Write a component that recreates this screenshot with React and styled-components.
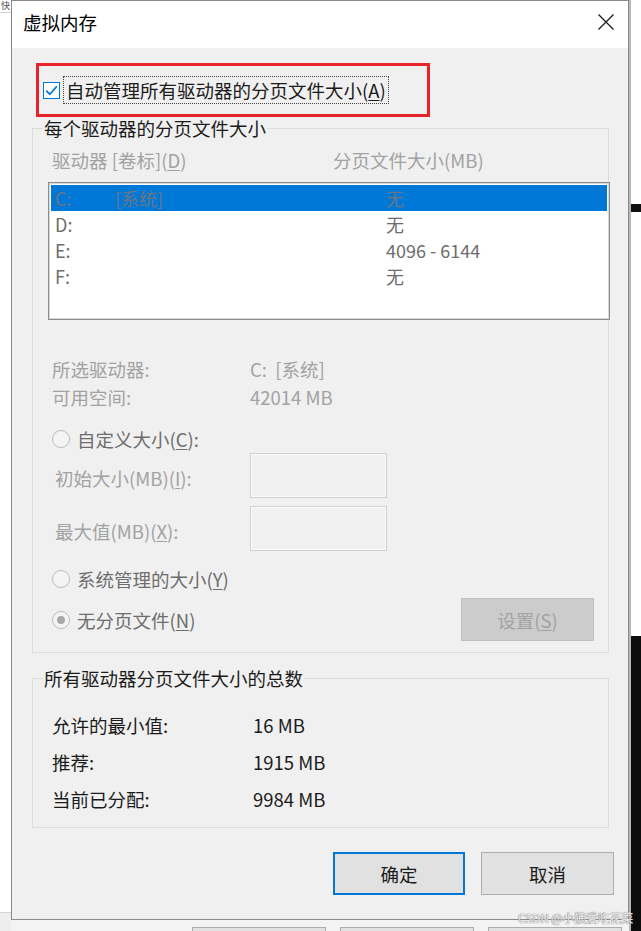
import React from 'react'
import styled, { createGlobalStyle } from 'styled-components'

const GlobalStyle = createGlobalStyle`
    html, body {
        margin: 0;
        padding: 0;
        background: #fff;
    }
    body {
        font-family: "Noto Sans CJK SC", "Noto Sans", sans-serif;
    }
    * {
        box-sizing: border-box;
    }
`

const DARK = '#1b1b1b'
const DIM = '#6d6d6d'
const FAINT = '#a2a2a2'
const FACE = '#f0f0f0'
const BLUE = '#0078d7'

const Screen = styled.div`
    position: relative;
    display: flex;
    width: 641px;
    height: 931px;
    overflow: hidden;
    background: #fff;
`

const LeftStrip = styled.div`
    width: 11px;
    display: flex;
    flex-direction: column;
`

const LeftTop = styled.div`
    height: 13px;
    border-bottom: 1px solid #d4d4d4;
    font-size: 9px;
    line-height: 11px;
    color: #555;
    padding-left: 1px;
`

const LeftFill = styled.div`
    flex: 1;
`

const LeftFoot = styled.div`
    height: 19px;
    background: #eeeeee;
    border-top: 1px solid #d6d6d6;
`

const MainColumn = styled.div`
    width: 618px;
    display: flex;
    flex-direction: column;
`

const Dialog = styled.div`
    height: 920px;
    display: flex;
    flex-direction: column;
    border: 1px solid #8a8a8a;
    background: ${FACE};
`

const TitleBar = styled.div`
    height: 47px;
    background: #fff;
    display: flex;
    align-items: center;
    justify-content: space-between;
    padding: 0 14px 6px 11px;
`

const Title = styled.span`
    font-size: 18.5px;
    color: #000;
    line-height: 22px;
`

const Body = styled.div`
    flex: 1;
    display: flex;
    flex-direction: column;
    padding: 15px 19px 0 20px;
    font-size: 18.5px;
`

const AutoRow = styled.div`
    margin-left: 4px;
    width: 394px;
    height: 54px;
    border: 3px solid #e8242b;
    display: flex;
    align-items: center;
    gap: 3px;
    padding-left: 4px;
`

const CheckLabel = styled.span`
    border: 1px dotted #444;
    padding: 0 2px;
    line-height: 26px;
    color: ${DARK};
    white-space: nowrap;
`

const Key = styled.span`
    text-decoration: underline;
    text-underline-offset: 2px;
    text-decoration-thickness: 1px;
`

const GroupBox = styled.fieldset`
    margin: ${p => p.$top}px 0 0 0;
    padding: 0 0 ${p => p.$bottom}px 10px;
    border: 1px solid #dcdcdc;
    min-inline-size: 0;
`

const Legend = styled.legend`
    padding: 0 1px;
    line-height: 20px;
    color: ${DARK};
`

const GroupInner = styled.div`
    padding: ${p => p.$top}px 0 0 ${p => p.$left}px;
    display: flex;
    flex-direction: column;
`

const ColumnHead = styled.div`
    display: grid;
    grid-template-columns: 281px 1fr;
    padding-left: 4px;
    line-height: 22px;
    color: ${FAINT};
`

const DriveList = styled.div`
    margin: 11px -2px 0 0;
    height: 138px;
    background: #fff;
    border: 1px solid #8c8c8c;
    box-shadow: inset 0 0 0 1px #d9d9d9;
    padding: 2px;
`

const DriveRow = styled.div`
    display: grid;
    grid-template-columns: 60px 271px 1fr;
    height: 26px;
    align-items: center;
    padding-left: 4px;
    font-size: 18px;
    line-height: 26px;
    color: ${p => (p.$selected ? '#6b7684' : DIM)};
    background: ${p => (p.$selected ? BLUE : 'transparent')};
`

const InfoGrid = styled.div`
    display: grid;
    grid-template-columns: 198px 1fr;
    grid-auto-rows: 28px;
    align-items: center;
    margin-top: 35px;
    padding-left: 4px;
    color: ${FAINT};
`

const RadioRow = styled.div`
    display: flex;
    align-items: center;
    gap: 7px;
    height: 28px;
    margin-top: ${p => p.$top}px;
    padding-left: 4px;
    color: ${DIM};
`

const Radio = styled.span`
    width: 18px;
    height: 18px;
    border-radius: 50%;
    border: 1px solid #bcbcbc;
    background: #f4f4f4;
    display: flex;
    align-items: center;
    justify-content: center;
    &::after {
        content: '';
        width: 8px;
        height: 8px;
        border-radius: 50%;
        background: ${p => (p.$checked ? '#a8a8a8' : 'transparent')};
    }
`

const FieldRow = styled.div`
    display: grid;
    grid-template-columns: 195px 137px;
    align-items: center;
    margin-top: ${p => p.$top}px;
    padding-left: 7px;
    color: ${FAINT};
`

const FieldLabel = styled.span`
    line-height: 22px;
    padding-top: 5px;
`

const FieldBox = styled.div`
    height: 45px;
    border: 1px solid #cfcfcf;
    box-shadow: inset 0 0 0 1px #fbfbfb;
    background: ${FACE};
`

const LastRow = styled.div`
    display: flex;
    align-items: center;
    justify-content: space-between;
    margin-top: 5px;
    padding-right: 14px;
`

const TotalsGrid = styled.div`
    display: grid;
    grid-template-columns: 201px 1fr;
    grid-auto-rows: 37px;
    align-items: center;
    color: ${DARK};
`

const ButtonBar = styled.div`
    display: flex;
    justify-content: flex-end;
    gap: 16px;
    margin: 24px -5px 0 0;
`

const Button = styled.div`
    width: ${p => p.$w || 133}px;
    height: 43px;
    display: flex;
    align-items: center;
    justify-content: center;
    font-size: 18.5px;
    color: ${p => (p.$disabled ? FAINT : DARK)};
    background: ${p => (p.$disabled ? '#cccccc' : '#e1e1e1')};
    border: ${p => (p.$primary ? `2px solid ${BLUE}` : p.$disabled ? '1px solid #bfbfbf' : '1px solid #adadad')};
`

const BottomStrip = styled.div`
    flex: 1;
    display: flex;
    align-items: flex-end;
    gap: 14px;
    padding-left: 181px;
    background: #f3f3f3;
`

const BackButton = styled.div`
    width: 134px;
    height: 4px;
    border: 1px solid #adadad;
    border-bottom: none;
    background: #e1e1e1;
`

const RightStrip = styled.div`
    flex: 1;
    display: flex;
    flex-direction: column;
    background: #fff;
    border-left: 2px solid #b8b8b8;
`

const RightBand = styled.div`
    height: ${p => p.$h}px;
    background: ${p => p.$bg};
    flex: ${p => (p.$grow ? 1 : 'none')};
`

const Watermark = styled.div`
    position: absolute;
    left: 518px;
    top: 910px;
    font-size: 12px;
    line-height: 15px;
    letter-spacing: -0.2px;
    color: #eeeeee;
    text-shadow: 0 0 1px #777, 0 0 1px #777;
    white-space: nowrap;
`

function CheckBox() {
    return (
        <svg width="17" height="17" viewBox="0 0 17 17">
            <rect x="0.5" y="0.5" width="16" height="16" fill="#fff" stroke={BLUE} />
            <path d="M3.2 8.6 L6.8 12.2 L13.8 4.4" fill="none" stroke={BLUE} strokeWidth="1.7" />
        </svg>
    )
}

function CloseIcon() {
    return (
        <svg width="16" height="16" viewBox="0 0 16 16">
            <path d="M0.5 0.5 L15.5 15.5 M15.5 0.5 L0.5 15.5" stroke="#1a1a1a" strokeWidth="1.3" />
        </svg>
    )
}

const drives = [
    { letter: 'C:', label: '[系统]', size: '无', selected: true },
    { letter: 'D:', label: '', size: '无' },
    { letter: 'E:', label: '', size: '4096 - 6144' },
    { letter: 'F:', label: '', size: '无' },
]

const totals = [
    ['允许的最小值:', '16 MB'],
    ['推荐:', '1915 MB'],
    ['当前已分配:', '9984 MB'],
]

export default function App() {
    return (
        <Screen>
            <GlobalStyle />
            <LeftStrip>
                <LeftTop>快</LeftTop>
                <LeftFill />
                <LeftFoot />
            </LeftStrip>

            <MainColumn>
                <Dialog>
                    <TitleBar>
                        <Title>虚拟内存</Title>
                        <CloseIcon />
                    </TitleBar>

                    <Body>
                        <AutoRow>
                            <CheckBox />
                            <CheckLabel>自动管理所有驱动器的分页文件大小(<Key>A</Key>)</CheckLabel>
                        </AutoRow>

                        <GroupBox $top={1} $bottom={11}>
                            <Legend>每个驱动器的分页文件大小</Legend>
                            <GroupInner $top={11} $left={5}>
                                <ColumnHead>
                                    <span>驱动器 [卷标](<Key>D</Key>)</span>
                                    <span>分页文件大小(MB)</span>
                                </ColumnHead>

                                <DriveList>
                                    {drives.map(d => (
                                        <DriveRow key={d.letter} $selected={d.selected}>
                                            <span>{d.letter}</span>
                                            <span>{d.label}</span>
                                            <span>{d.size}</span>
                                        </DriveRow>
                                    ))}
                                </DriveList>

                                <InfoGrid>
                                    <span>所选驱动器:</span>
                                    <span>C:&nbsp;&nbsp;[系统]</span>
                                    <span>可用空间:</span>
                                    <span>42014 MB</span>
                                </InfoGrid>

                                <RadioRow $top={14}>
                                    <Radio />
                                    <span>自定义大小(<Key>C</Key>):</span>
                                </RadioRow>

                                <FieldRow $top={0}>
                                    <FieldLabel>初始大小(MB)(<Key>I</Key>):</FieldLabel>
                                    <FieldBox />
                                </FieldRow>
                                <FieldRow $top={8}>
                                    <FieldLabel>最大值(MB)(<Key>X</Key>):</FieldLabel>
                                    <FieldBox />
                                </FieldRow>

                                <RadioRow $top={14}>
                                    <Radio />
                                    <span>系统管理的大小(<Key>Y</Key>)</span>
                                </RadioRow>

                                <LastRow>
                                    <RadioRow $top={0}>
                                        <Radio $checked />
                                        <span>无分页文件(<Key>N</Key>)</span>
                                    </RadioRow>
                                    <Button $disabled>设置(<Key>S</Key>)</Button>
                                </LastRow>
                            </GroupInner>
                        </GroupBox>

                        <GroupBox $top={15} $bottom={10}>
                            <Legend>所有驱动器分页文件大小的总数</Legend>
                            <GroupInner $top={18} $left={9}>
                                <TotalsGrid>
                                    {totals.map(([label, value]) => (
                                        <React.Fragment key={label}>
                                            <span>{label}</span>
                                            <span>{value}</span>
                                        </React.Fragment>
                                    ))}
                                </TotalsGrid>
                            </GroupInner>
                        </GroupBox>

                        <ButtonBar>
                            <Button $primary $w={132}>确定</Button>
                            <Button>取消</Button>
                        </ButtonBar>
                    </Body>
                </Dialog>

                <BottomStrip>
                    <BackButton />
                    <BackButton />
                    <BackButton />
                </BottomStrip>
            </MainColumn>

            <RightStrip>
                <RightBand $h={204} $bg="#fff" />
                <RightBand $h={8} $bg="#111" />
                <RightBand $h={424} $bg="#fff" />
                <RightBand $grow $bg="#0c0c0c" />
            </RightStrip>

            <Watermark>CSDN @小狼爱吃花菜</Watermark>
        </Screen>
    )
}
